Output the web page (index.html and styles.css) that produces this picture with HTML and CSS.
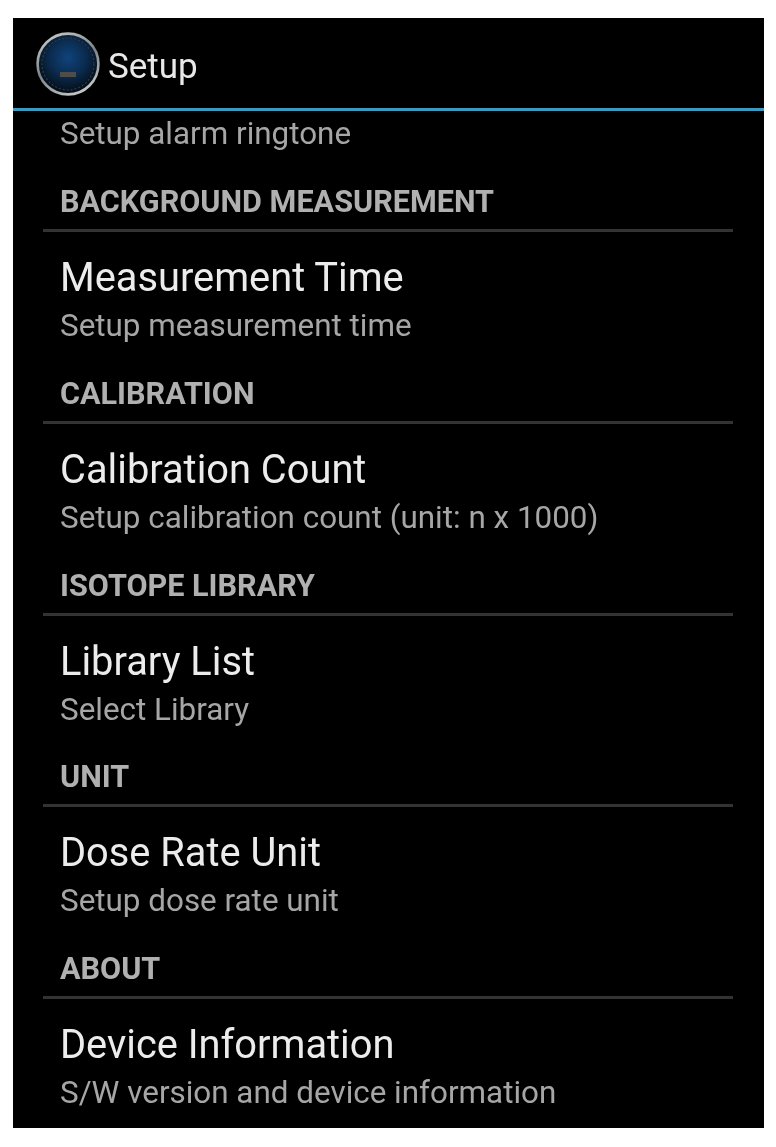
FILE: index.html
```html
<!DOCTYPE html>
<html lang="en">
<head>
    <meta charset="UTF-8">
    <meta name="viewport" content="width=device-width, initial-scale=1.0">
    <title>Setup</title>
    <link rel="stylesheet" href="styles.css">
</head>
<body>
    <div class="screen">
        <div class="action-bar">
            <svg class="app-icon" width="64" height="64" viewBox="0 0 64 64">
                <defs>
                    <radialGradient id="dial" cx="50%" cy="40%" r="58%">
                        <stop offset="0" stop-color="#0f437c"/>
                        <stop offset="0.5" stop-color="#0b2c50"/>
                        <stop offset="1" stop-color="#050c14"/>
                    </radialGradient>
                    <linearGradient id="ring" x1="0.2" y1="0" x2="0.7" y2="1">
                        <stop offset="0" stop-color="#c4c8c8"/>
                        <stop offset="0.5" stop-color="#7d8486"/>
                        <stop offset="1" stop-color="#c8c8c8"/>
                    </linearGradient>
                </defs>
                <circle cx="32" cy="32" r="30.4" fill="url(#dial)" stroke="url(#ring)" stroke-width="2.6"/>
                <circle cx="32" cy="32" r="26" fill="none" stroke="#2a3a48" stroke-width="1.2" stroke-dasharray="2 2"/>
                <rect x="24" y="40" width="16" height="5" fill="#4e4d4a"/>
            </svg>
            <span class="bar-title">Setup</span>
        </div>
        <div class="bar-line"></div>
        <div class="list">
            <p class="summary first-summary">Setup alarm ringtone</p>

            <div class="group">
                <div class="section">BACKGROUND MEASUREMENT</div>
                <div class="item-title">Measurement Time</div>
                <p class="summary">Setup measurement time</p>
            </div>
            <div class="group">
                <div class="section">CALIBRATION</div>
                <div class="item-title">Calibration Count</div>
                <p class="summary">Setup calibration count (unit: n x 1000)</p>
            </div>
            <div class="group">
                <div class="section">ISOTOPE LIBRARY</div>
                <div class="item-title">Library List</div>
                <p class="summary">Select Library</p>
            </div>
            <div class="group">
                <div class="section">UNIT</div>
                <div class="item-title">Dose Rate Unit</div>
                <p class="summary">Setup dose rate unit</p>
            </div>
            <div class="group">
                <div class="section">ABOUT</div>
                <div class="item-title">Device Information</div>
                <p class="summary">S/W version and device information</p>
            </div>
        </div>
    </div>
</body>
</html>
```

FILE: styles.css
```css
body, html {
    margin: 0;
    padding: 0;
    background: #fff;
    font-family: Roboto, "Liberation Sans", sans-serif;
}

.screen {
    width: 751px;
    height: 1110px;
    margin: 18px 0 0 13px;
    background: #000;
    overflow: hidden;
    filter: blur(0.6px);
}

.action-bar {
    display: flex;
    align-items: center;
    height: 90px;
    padding-left: 23px;
}

.app-icon {
    flex: none;
    margin-top: 2px;
}

.bar-title {
    margin-left: 8px;
    padding-top: 7px;
    font-size: 35px;
    color: #e8e8e8;
}

.bar-line {
    height: 3px;
    background: #3a9bc0;
}

.list {
    padding: 0 31px 0 30px;
}

.summary {
    margin: 0;
    padding-left: 17px;
    font-size: 31.4px;
    line-height: 36px;
    color: #a6a6a6;
}

.first-summary {
    padding-top: 5px;
    height: 36px;
}

.group {
    height: 191.75px;
}

.section {
    height: 46px;
    padding: 31px 0 0 17px;
    border-bottom: 3px solid #333;
    font-size: 30.6px;
    font-weight: 700;
    line-height: 38px;
    color: #b0b0b0;
}

.item-title {
    padding: 23px 0 7px 17px;
    font-size: 39.8px;
    line-height: 46px;
    color: #ececec;
}
```
